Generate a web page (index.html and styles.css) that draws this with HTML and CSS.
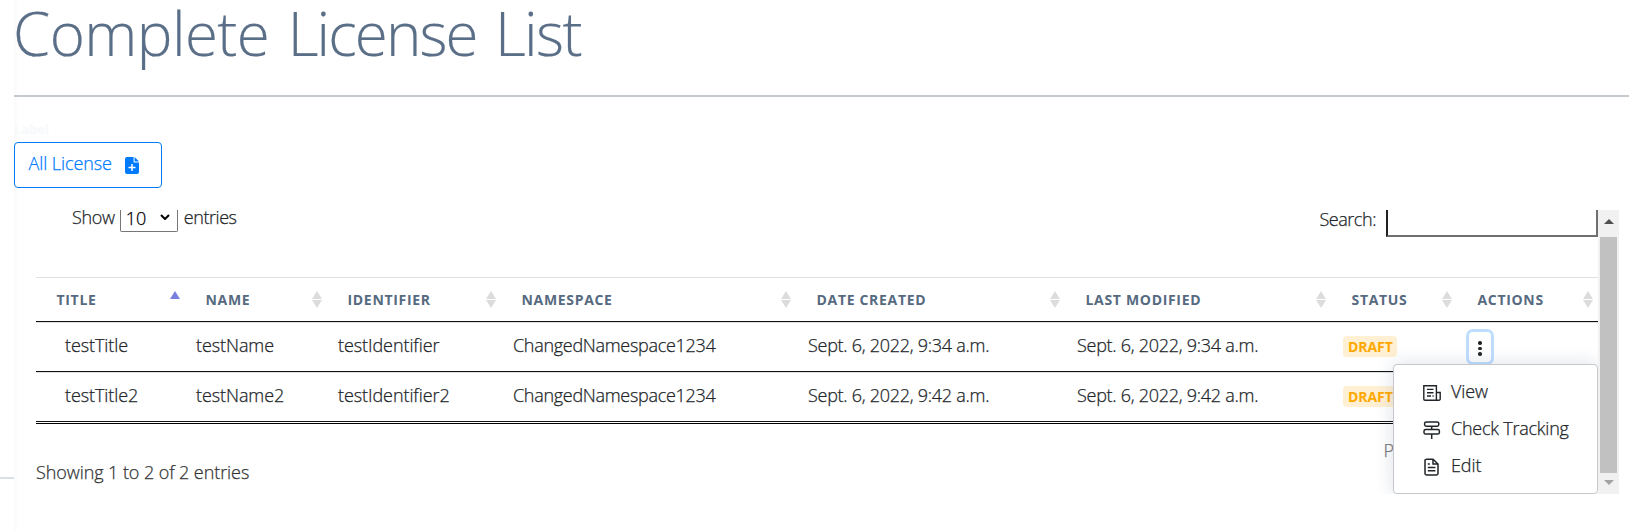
FILE: index.html
```html
<!DOCTYPE html>
<html lang="en">
<head>
<meta charset="utf-8">
<title>Complete License List</title>
<link rel="stylesheet" href="styles.css">
</head>
<body>
<aside class="rail"></aside>
<main class="main">
  <h1 class="title"><span class="lead">Complete</span> <span class="mid">License</span> <span class="tail">List</span></h1>
  <div class="label">Label</div>
  <button class="all-btn"><span class="t-btn">All License</span>
    <svg class="file-plus" viewBox="0 0 14 17"><path fill="#007bff" d="M2 0H8.6V5.4H14V15a2 2 0 0 1-2 2H2a2 2 0 0 1-2-2V2A2 2 0 0 1 2 0ZM9.6 0 14 4.4H9.6Z"/><path stroke="#fff" stroke-width="1.5" d="M7 7v7M3.5 10.5h7"/></svg>
  </button>
  <section class="panel">
    <div class="content">
      <div class="controls">
        <div class="length"><span class="t-show">Show</span><span class="select"><span class="t-ten">10</span><svg viewBox="0 0 10 6"><path d="M1 1l4 4 4-4" fill="none" stroke="#000" stroke-width="2"/></svg></span><span class="t-entries">entries</span></div>
        <div class="search"><span class="t-search">Search:</span><input class="field" aria-label="Search"></div>
      </div>
      <table class="table">
        <colgroup><col class="c1"><col class="c2"><col class="c3"><col class="c4"><col class="c5"><col class="c6"><col class="c7"><col class="c8"></colgroup>
        <thead><tr>
          <th><div class="th"><span>TITLE</span><i class="sort asc"></i></div></th>
          <th><div class="th"><span>NAME</span><i class="sort"></i></div></th>
          <th><div class="th"><span>IDENTIFIER</span><i class="sort"></i></div></th>
          <th><div class="th"><span>NAMESPACE</span><i class="sort"></i></div></th>
          <th><div class="th"><span>DATE CREATED</span><i class="sort"></i></div></th>
          <th><div class="th"><span>LAST MODIFIED</span><i class="sort"></i></div></th>
          <th><div class="th"><span>STATUS</span><i class="sort"></i></div></th>
          <th><div class="th"><span>ACTIONS</span><i class="sort"></i></div></th>
        </tr></thead>
        <tbody>
          <tr><td class="first">testTitle</td><td>testName</td><td>testIdentifier</td><td><span class="t-ns">ChangedNamespace1234</span></td><td><span class="t-date">Sept. 6, 2022, 9:34 a.m.</span></td><td><span class="t-date">Sept. 6, 2022, 9:34 a.m.</span></td><td class="status"><span class="badge">DRAFT</span></td>
            <td class="act"><button class="kebab" aria-label="Actions"><i></i><i></i><i></i></button></td></tr>
          <tr><td class="first">testTitle2</td><td>testName2</td><td>testIdentifier2</td><td><span class="t-ns">ChangedNamespace1234</span></td><td><span class="t-date">Sept. 6, 2022, 9:42 a.m.</span></td><td><span class="t-date">Sept. 6, 2022, 9:42 a.m.</span></td><td class="status"><span class="badge">DRAFT</span></td><td></td></tr>
        </tbody>
      </table>
      <div class="footer"><span class="info">Showing 1 to 2 of 2 entries</span><span class="prev">P</span></div>
      <div class="menu">
        <div class="item"><svg viewBox="0 0 18 18"><g fill="none" stroke="#212529" stroke-width="1.4"><path d="M13.4 16.2H2A1.2 1.2 0 0 1 .8 15V1.8H13.4ZM13.4 8.5H17.2V15a1.2 1.2 0 0 1-1.2 1.2H14.6a1.2 1.2 0 0 1-1.2-1.2"/><path d="M4 5.4h6.5M4 8.7h6.5M4 12h4M9.5 12h1.2"/></g></svg><span class="t-view">View</span></div>
        <div class="item"><svg viewBox="0 0 18 18"><g fill="none" stroke="#212529" stroke-width="1.5"><rect x="1.6" y="1" width="14.2" height="4.2" rx="1.6"/><rect x="1" y="8.6" width="15.4" height="4.4" rx="1.6"/><path d="M8.7 5.2v3.4M8.7 13v5"/></g></svg><span class="t-track">Check Tracking</span></div>
        <div class="item"><svg viewBox="0 0 18 18"><g fill="none" stroke="#212529" stroke-width="1.5"><path d="M3 1.2H10L15 6V15.6A1.4 1.4 0 0 1 13.6 17H3.4A1.4 1.4 0 0 1 2 15.6V2.4A1.2 1.2 0 0 1 3.2 1.2ZM10 1.2V6h5M4.8 9.4h7.6M4.8 12.8h7.6M4.8 6h2"/></g></svg><span class="t-edit">Edit</span></div>
      </div>
    </div>
    <div class="scrollbar"><i class="up"></i><i class="thumb"></i><i class="down"></i></div>
  </section>
</main>
</body>
</html>
```
FILE: styles.css
```css
* { box-sizing: border-box; }
body {
  margin: 0;
  height: 531px;
  display: flex;
  overflow: hidden;
  background: #fff;
  color: #212529;
  font: 300 18px/26px "Open Sans", "Noto Sans", sans-serif;
  letter-spacing: -.08px;
  -webkit-text-stroke: .25px;
  white-space: nowrap;
}
span { display: inline-block; }
button { font: inherit; letter-spacing: inherit; }
.rail { width: 14px; height: 479px; flex: none; border-bottom: 2px solid #d8dfe5; }
.main {
  width: 1615px;
  height: 531px;
  flex: none;
  background: linear-gradient(to right, #fafafa, #fff 5px);
}
.title {
  margin: 0;
  height: 97px;
  border-bottom: 2px solid #c4cad0;
  color: #5a6f87;
  font-size: 60px;
  line-height: 66px;
  font-weight: 300;
  letter-spacing: -1.2px;
  word-spacing: 4px;
  -webkit-text-stroke: .2px;
}
.lead { margin-left: -1px; letter-spacing: -.55px; }
.mid { letter-spacing: -1.9px; }
.tail { letter-spacing: -1.6px; }
.label {
  height: 45px;
  padding-top: 23px;
  color: #f7f9fb;
  font-size: 13px;
  line-height: 18px;
  font-weight: 700;
}
.all-btn {
  display: flex;
  align-items: center;
  width: 148px;
  height: 46px;
  padding: 0 0 4px 13.5px;
  gap: 13px;
  border: 1px solid #007bff;
  border-radius: 4px;
  background: #fff;
  color: #007bff;
}
.file-plus { width: 14px; height: 17px; margin-top: 4px; }
.panel { display: flex; width: 1605px; height: 284px; margin-top: 22px; padding-left: 22px; }
.content { position: relative; width: 1562px; height: 284px; }
.controls { display: flex; justify-content: space-between; height: 67px; padding-left: 36px; }
.length { display: flex; height: 22px; line-height: 15px; }
.select {
  display: flex;
  width: 58px;
  height: 22px;
  margin: 0 6px 0 5px;
  padding: 0 7px 0 5px;
  justify-content: space-between;
  border: 1px solid #767676;
  border-top: 0;
  border-radius: 0 0 2px 2px;
  color: #000;
}
.select svg { width: 10px; height: 6px; margin-top: 4px; }
.t-entries { letter-spacing: -.45px; }
.t-show { letter-spacing: -.3px; }
.t-ten { line-height: 16px; }
.search { display: flex; line-height: 19px; gap: 10px; }
.t-search { letter-spacing: -.45px; }
.field { width: 212px; height: 27px; padding: 0; border: 2px solid #6f6f6f; border-left-color: #212121; border-top: 0; background: #fff; outline: 0; }
.table { width: 1562px; table-layout: fixed; border-spacing: 0; padding-bottom: 1px; border-bottom: 1px solid #000; }
.c1 { width: 149px; } .c2 { width: 142px; } .c3 { width: 174px; } .c4 { width: 295px; }
.c5 { width: 269px; } .c6 { width: 266px; } .c7 { width: 126px; } .c8 { width: 141px; }
th { height: 45px; padding: 0; border-top: 1px solid #dee2e6; border-bottom: 1px solid #111; }
.th {
  display: flex;
  justify-content: space-between;
  align-items: center;
  padding: 0 5px 0 20.5px;
  color: #566a80;
  font-size: 14px;
  line-height: 20px;
  font-weight: 700;
  letter-spacing: .68px;
  -webkit-text-stroke: 0;
}
.sort { display: grid; gap: 1px; }
.sort::before, .sort::after { content: ""; border: 5px solid transparent; }
.sort::before { border-top: 0; border-bottom: 8px solid #dcdcdc; }
.sort::after { border-bottom: 0; border-top: 8px solid #dcdcdc; }
.asc::before { border-bottom-color: #7b80df; }
.asc::after { border-top-color: transparent; }
td { height: 50px; padding: 0 0 5px 11px; border-top: 1px solid #dee2e6; border-bottom: 1px solid #111; }
td.first { padding-left: 29px; }
.t-ns { letter-spacing: -.3px; text-indent: 1px; }
.t-date { letter-spacing: -.27px; text-indent: 1px; }
td.status { padding: 0 0 2px 12px; }
.badge { display: block; width: 54px; height: 21px; padding-left: 5px; border-radius: 4px; background: #fff0d3; color: #ffa800; font-size: 14px; line-height: 22px; font-weight: 700; -webkit-text-stroke: 0; }
td.act { padding: 0 0 0 12px; }
.kebab {
  display: grid;
  width: 22px;
  height: 30px;
  padding: 9px 0 0;
  justify-content: center;
  align-content: start;
  gap: 2px;
  border: 0;
  border-radius: 4px;
  background: #fff;
  box-shadow: 0 0 0 3px #bfdeff;
}
.kebab i { width: 3.5px; height: 3.5px; border-radius: 50%; background: #212529; }
.footer { display: flex; justify-content: space-between; padding: 13px 204px 0 0; color: #333; }
.info { margin-top: 22px; }
.prev { color: #777; }
.menu {
  position: absolute;
  right: 0;
  bottom: 0;
  width: 205px;
  height: 130px;
  padding: 7px 0 0 29px;
  border: 1px solid #c5c8cc;
  border-radius: 4px;
  background: #fff;
  box-shadow: 0 0 18px rgba(90, 110, 140, .22);
  clip-path: inset(-30px 0 0 -30px);
}
.item { display: flex; align-items: center; height: 37px; gap: 10px; }
.item svg { width: 18px; height: 18px; margin-top: 4px; }
.t-track { letter-spacing: -.23px; }
.scrollbar { display: flex; flex-direction: column; align-items: center; width: 21px; background: #f1f1f1; }
.up, .down { border: 5px solid transparent; }
.up { margin-top: 9px; border-top: 0; border-bottom-color: #505050; }
.thumb { width: 17px; height: 236px; margin: 13px 0 7px; background: #c1c1c1; }
.down { border-bottom: 0; border-top-color: #a3a3a3; }
```
